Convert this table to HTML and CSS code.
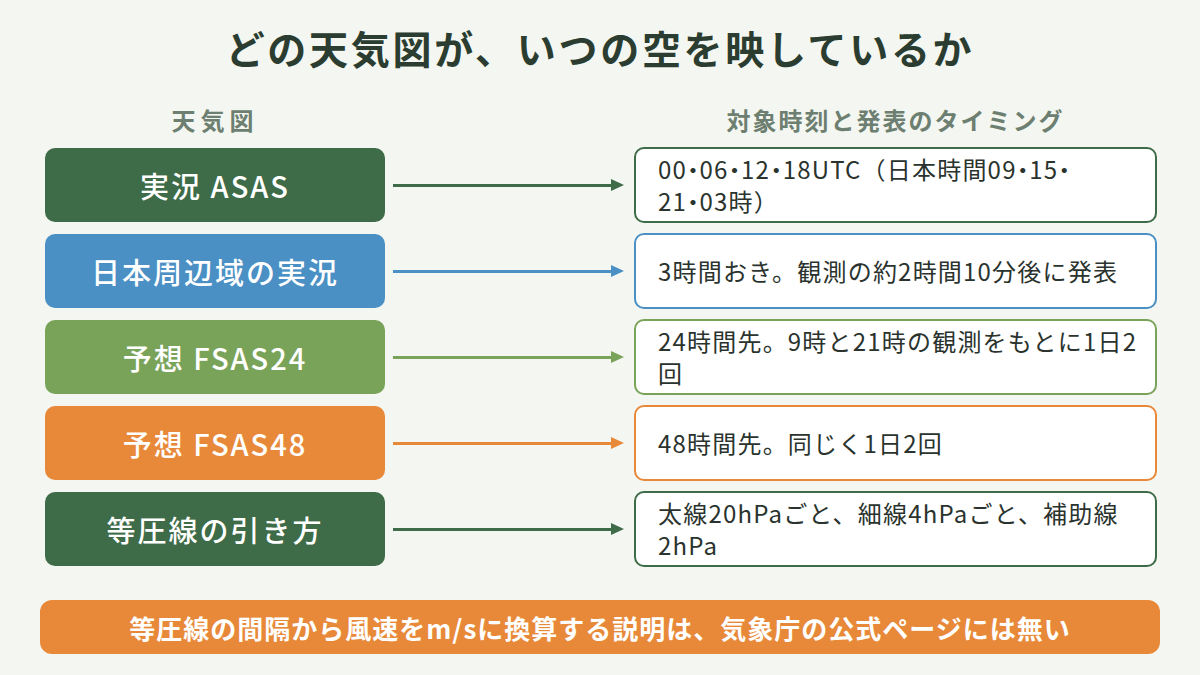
FILE: index.html
```html
<!DOCTYPE html>
<html lang="ja">
<head>
<meta charset="utf-8">
<title>どの天気図が、いつの空を映しているか</title>
<link rel="stylesheet" href="styles.css">
</head>
<body>
<div class="page">
  <h1 class="title">どの天気図が、いつの空を映しているか</h1>
  <div class="heads">
    <div class="head head-left">天気図</div>
    <div class="head-spacer"></div>
    <div class="head head-right">対象時刻と発表のタイミング</div>
  </div>
  <div class="grid">
    <div class="label c-dark">実況 ASAS</div>
    <div class="arrow a-dark"><span class="line"></span><span class="tip"></span></div>
    <div class="desc b-dark"><span class="txt">00<span class="dot">・</span>06<span class="dot">・</span>12<span class="dot">・</span>18UTC（日本時間09<span class="dot">・</span>15<span class="dot">・</span><br>21<span class="dot">・</span>03時）</span></div>

    <div class="label c-blue">日本周辺域の実況</div>
    <div class="arrow a-blue"><span class="line"></span><span class="tip"></span></div>
    <div class="desc b-blue"><span class="txt">3時間おき。観測の約2時間10分後に発表</span></div>

    <div class="label c-light">予想 FSAS24</div>
    <div class="arrow a-light"><span class="line"></span><span class="tip"></span></div>
    <div class="desc b-light"><span class="txt">24時間先。9時と21時の観測をもとに1日2<br>回</span></div>

    <div class="label c-orange">予想 FSAS48</div>
    <div class="arrow a-orange"><span class="line"></span><span class="tip"></span></div>
    <div class="desc b-orange"><span class="txt">48時間先。同じく1日2回</span></div>

    <div class="label c-dark">等圧線の引き方</div>
    <div class="arrow a-dark"><span class="line"></span><span class="tip"></span></div>
    <div class="desc b-dark"><span class="txt">太線20hPaごと、細線4hPaごと、補助線<br>2hPa</span></div>
  </div>
  <div class="banner">等圧線の間隔から風速をm/sに換算する説明は、気象庁の公式ページには無い</div>
</div>
</body>
</html>
```

FILE: styles.css
```css
* { box-sizing: border-box; }
html, body {
  margin: 0;
  padding: 0;
  background: #f4f6f1;
}
body {
  font-family: "Noto Sans CJK JP", "Noto Sans", sans-serif;
  width: 1200px;
  height: 675px;
  overflow: hidden;
}
.page {
  display: flex;
  flex-direction: column;
  padding: 19px 40px 0 40px;
}
.title {
  margin: 0;
  height: 56px;
  line-height: 56px;
  font-size: 39px;
  font-weight: 700;
  letter-spacing: 2.7px;
  text-align: center;
  color: #2b3d30;
}
.heads {
  margin-top: 30px;
  display: grid;
  grid-template-columns: 340px 249px 523px;
  padding-left: 5px;
  height: 30px;
  align-items: center;
}
.head {
  font-size: 24px;
  font-weight: 700;
  letter-spacing: 2px;
  color: #6d7f70;
  text-align: center;
  line-height: 30px;
}
.head-left { letter-spacing: 5px; }
.grid {
  margin-top: 12px;
  display: grid;
  grid-template-columns: 340px 249px 523px;
  grid-auto-rows: 76px;
  row-gap: 10px;
  padding-left: 5px;
}
.label {
  align-self: center;
  height: 74px;
  border-radius: 10px;
  display: flex;
  align-items: center;
  justify-content: center;
  color: #ffffff;
  font-size: 29px;
  font-weight: 500;
  letter-spacing: 2px;
}
.c-dark { background: #3e6b48; }
.c-blue { background: #4a90c4; }
.c-light { background: #7aa35a; }
.c-orange { background: #e8893a; }

.arrow {
  display: flex;
  align-items: center;
  padding: 0 10px 0 8px;
}
.arrow .line {
  flex: 1;
  height: 3px;
}
.arrow .tip {
  width: 0;
  height: 0;
  border-top: 6px solid transparent;
  border-bottom: 6px solid transparent;
  border-left: 13px solid;
}
.a-dark .line { background: #3e6b48; }
.a-dark .tip { border-left-color: #3e6b48; }
.a-blue .line { background: #4a90c4; }
.a-blue .tip { border-left-color: #4a90c4; }
.a-light .line { background: #7aa35a; }
.a-light .tip { border-left-color: #7aa35a; }
.a-orange .line { background: #e8893a; }
.a-orange .tip { border-left-color: #e8893a; }

.desc {
  background: #ffffff;
  border: 2.5px solid;
  border-radius: 10px;
  display: flex;
  align-items: center;
  padding: 0 6px 0 22px;
  font-size: 24px;
  line-height: 32px;
  letter-spacing: 1.2px;
  color: #2a332d;
  white-space: nowrap;
}
.desc .dot {
  font-feature-settings: "halt" 1;
  letter-spacing: 0.5px;
}
.b-dark { border-color: #3e6b48; }
.b-blue { border-color: #4a90c4; }
.b-light { border-color: #7aa35a; }
.b-orange { border-color: #e8893a; }

.banner {
  margin-top: 33px;
  height: 54px;
  border-radius: 12px;
  background: #e8893a;
  color: #ffffff;
  font-size: 26px;
  font-weight: 700;
  letter-spacing: 1px;
  display: flex;
  align-items: center;
  justify-content: center;
}
```
